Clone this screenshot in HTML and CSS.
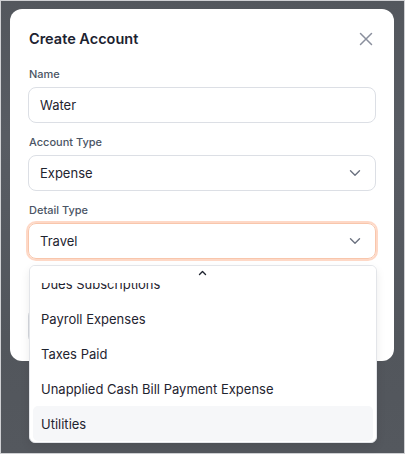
FILE: index.html
```html
<!DOCTYPE html>
<html lang="en">
<head>
<meta charset="utf-8">
<title>Create Account</title>
<link rel="stylesheet" href="styles.css">
</head>
<body>
<div class="backdrop">
  <div class="dialog">
    <div class="dialog-header">
      <h2 class="dialog-title">Create Account</h2>
      <button class="close-btn" aria-label="Close">
        <svg width="14" height="14" viewBox="0 0 14 14"><path d="M1.5 1.5 L12.5 12.5 M12.5 1.5 L1.5 12.5" stroke="#8a8f9d" stroke-width="1.5" stroke-linecap="round" fill="none"/></svg>
      </button>
    </div>
    <div class="field">
      <label class="label">Name</label>
      <div class="input">Water</div>
    </div>
    <div class="field">
      <label class="label">Account Type</label>
      <div class="input select">
        <span>Expense</span>
        <svg class="chev" width="12" height="8" viewBox="0 0 12 8"><path d="M1.5 1.8 L6 6.2 L10.5 1.8" stroke="#6b7280" stroke-width="1.4" fill="none" stroke-linecap="round" stroke-linejoin="round"/></svg>
      </div>
    </div>
    <div class="field popover-anchor">
      <label class="label">Detail Type</label>
      <div class="input select focused">
        <span>Travel</span>
        <svg class="chev" width="12" height="8" viewBox="0 0 12 8"><path d="M1.5 1.8 L6 6.2 L10.5 1.8" stroke="#6b7280" stroke-width="1.4" fill="none" stroke-linecap="round" stroke-linejoin="round"/></svg>
      </div>
      <div class="dropdown">
        <div class="scroll-up">
          <svg width="9" height="6" viewBox="0 0 9 6"><path d="M1.5 4.5 L4.5 1.5 L7.5 4.5" stroke="#1f2430" stroke-width="1.4" fill="none" stroke-linecap="round" stroke-linejoin="round"/></svg>
        </div>
        <div class="options">
          <div class="option">Dues Subscriptions</div>
          <div class="option">Payroll Expenses</div>
          <div class="option">Taxes Paid</div>
          <div class="option">Unapplied Cash Bill Payment Expense</div>
          <div class="option active">Utilities</div>
        </div>
      </div>
    </div>
    <div class="dialog-footer">
      <div class="btn btn-outline"></div>
      <div class="btn btn-primary"></div>
    </div>
  </div>
</div>
</body>
</html>
```

FILE: styles.css
```css
* { box-sizing: border-box; }

html, body {
  margin: 0;
  padding: 0;
}

body {
  width: 405px;
  height: 454px;
  overflow: hidden;
  font-family: Inter, "Liberation Sans", sans-serif;
  color: #1f2430;
}

.backdrop {
  width: 405px;
  height: 454px;
  border: 1px solid #cfd0d3;
  background: linear-gradient(180deg, #53575d 0%, #585c63 30%, #565a61 45%, #52565c 75%, #54585e 100%);
  padding: 8px 0 0 9px;
}

.dialog {
  width: 384px;
  height: 352px;
  background: #ffffff;
  border-radius: 12px;
  padding: 18px 18px 17px 18px;
  display: flex;
  flex-direction: column;
}

.dialog-header {
  display: flex;
  align-items: center;
  justify-content: space-between;
  height: 24px;
  margin-bottom: 15px;
}

.dialog-title {
  margin: 0 0 0 1px;
  font-size: 14.5px;
  font-weight: 600;
  line-height: 24px;
  color: #1c2230;
}

.close-btn {
  border: 0;
  background: transparent;
  padding: 0;
  margin-right: 3px;
  width: 14px;
  height: 14px;
  display: flex;
}

.field {
  display: flex;
  flex-direction: column;
  gap: 4px;
  margin-bottom: 11px;
}

.label {
  font-size: 11px;
  line-height: 17px;
  font-weight: 500;
  color: #4b5565;
  padding-left: 1px;
}

.input {
  height: 36px;
  border: 1px solid #dcdfe5;
  border-radius: 8px;
  padding: 0 12px 0 11px;
  font-size: 13px;
  display: flex;
  align-items: center;
  color: #1f2430;
}

.select {
  justify-content: space-between;
}

.chev {
  margin-right: 2px;
}

.focused {
  border-color: #f8c6ac;
  box-shadow: 0 0 0 2px #fed8c6;
}

.popover-anchor {
  position: relative;
}

.dropdown {
  position: absolute;
  left: 1px;
  top: 63px;
  width: 348px;
  height: 178px;
  background: #ffffff;
  border: 1px solid #e3e5e9;
  border-radius: 6px;
  box-shadow: 0 4px 10px rgba(0, 0, 0, 0.08);
  overflow: hidden;
  z-index: 10;
}

.scroll-up {
  position: absolute;
  top: 0;
  left: 0;
  right: 0;
  height: 17px;
  background: #ffffff;
  display: flex;
  justify-content: center;
  align-items: flex-start;
  padding-top: 4px;
  padding-right: 2px;
  z-index: 2;
}

.options {
  padding: 0 3px;
  display: flex;
  flex-direction: column;
}

.option {
  height: 35px;
  display: flex;
  align-items: center;
  padding-left: 8px;
  font-size: 13px;
  color: #1f2430;
  border-radius: 5px;
}

.option.active {
  background: #f6f7f9;
}

.dialog-footer {
  margin-top: auto;
  display: flex;
  gap: 8px;
}

.btn {
  height: 36px;
  border-radius: 8px;
}

.btn-outline {
  flex: 1;
  background: #ffffff;
  border: 1px solid #d5d8de;
}

.btn-primary {
  flex: 1;
  background: #f97316;
  border: 1px solid #f97316;
}
```
